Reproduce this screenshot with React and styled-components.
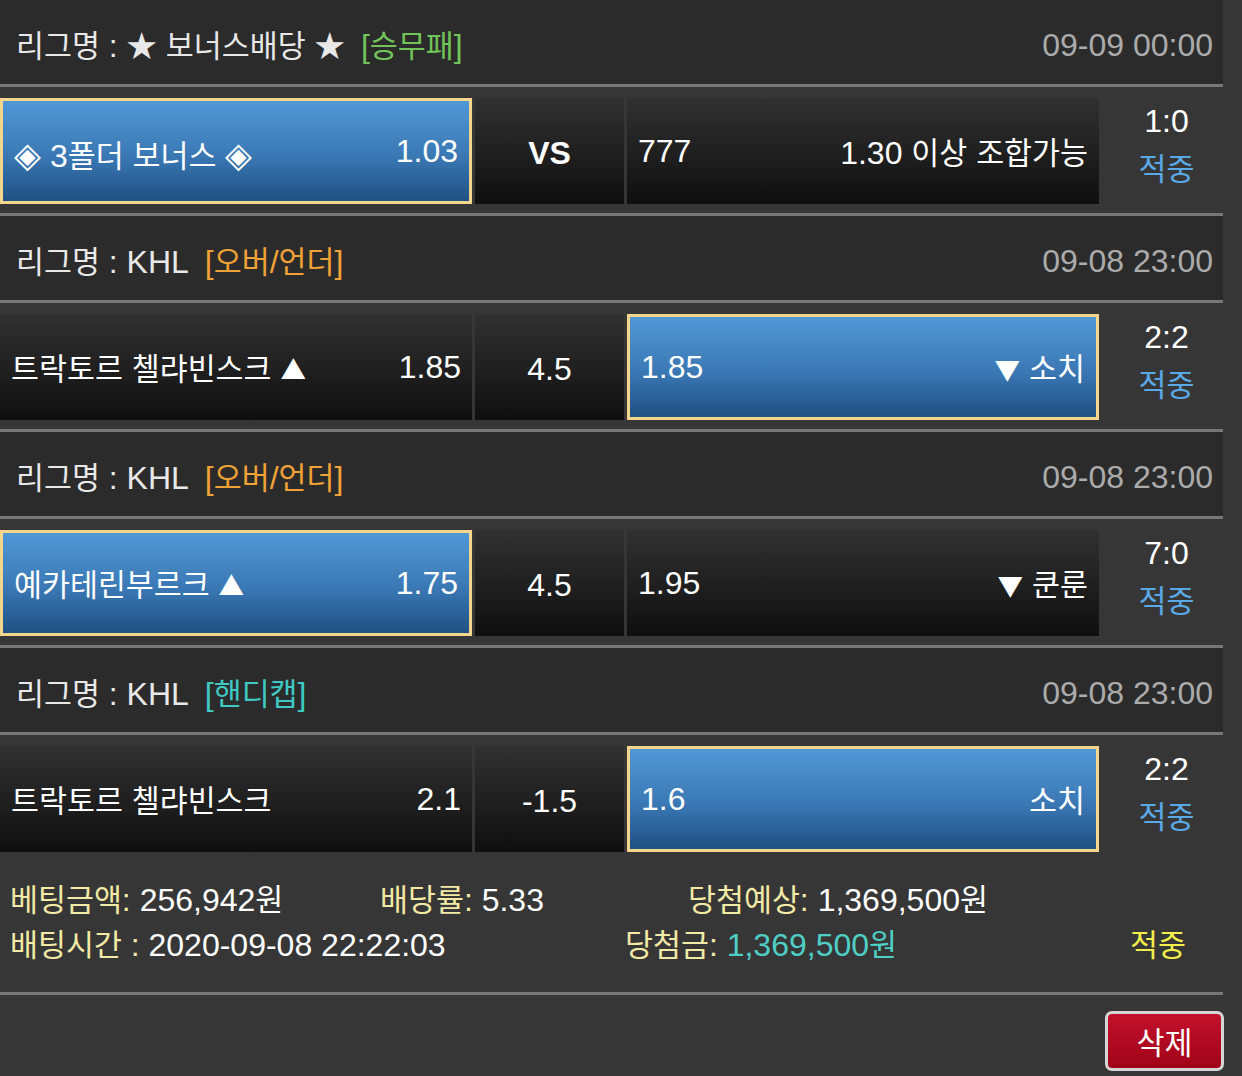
import React from 'react';
import styled, { createGlobalStyle } from 'styled-components';

const GlobalStyle = createGlobalStyle`
  html, body {
    margin: 0;
    padding: 0;
    background: #363636;
  }
  body {
    font-family: "Liberation Sans", "Noto Sans CJK KR", sans-serif;
    font-size: 32px;
    color: #fff;
  }
`;

// 한글은 CJK 폰트로, 삼각형(▲ ▼)은 작게, 다이아몬드(◈)는 크게
const RUNS = /([\u3131-\u318E\uAC00-\uD7A3\u2605]+|[\u25B2\u25BC]+|[\u25C8]+)/;
const ARROW = /^[\u25B2\u25BC]+$/;
const DIAMOND = /^[\u25C8]+$/;

const Txt = ({ children }) => {
  const parts = String(children).split(RUNS);
  return parts.map((p, i) => {
    if (!p) return null;
    if (ARROW.test(p)) return <Glyph key={i} size="0.8em">{p}</Glyph>;
    if (DIAMOND.test(p)) return <Glyph key={i} size="1.1em">{p}</Glyph>;
    if (RUNS.test(p)) return <Glyph key={i} size="0.95em">{p}</Glyph>;
    return p;
  });
};

const matches = [
  {
    league: '★ 보너스배당 ★',
    type: '승무패',
    typeColor: '#72c35a',
    time: '09-09 00:00',
    home: '◈ 3폴더 보너스 ◈',
    homeOdds: '1.03',
    mid: 'VS',
    awayOdds: '777',
    away: '1.30 이상 조합가능',
    pick: 'home',
    score: '1:0',
  },
  {
    league: 'KHL',
    type: '오버/언더',
    typeColor: '#f0a236',
    time: '09-08 23:00',
    home: '트락토르 첼랴빈스크 ▲',
    homeOdds: '1.85',
    mid: '4.5',
    awayOdds: '1.85',
    away: '▼ 소치',
    pick: 'away',
    score: '2:2',
  },
  {
    league: 'KHL',
    type: '오버/언더',
    typeColor: '#f0a236',
    time: '09-08 23:00',
    home: '예카테린부르크 ▲',
    homeOdds: '1.75',
    mid: '4.5',
    awayOdds: '1.95',
    away: '▼ 쿤룬',
    pick: 'home',
    score: '7:0',
  },
  {
    league: 'KHL',
    type: '핸디캡',
    typeColor: '#3fc9c4',
    time: '09-08 23:00',
    home: '트락토르 첼랴빈스크',
    homeOdds: '2.1',
    mid: '-1.5',
    awayOdds: '1.6',
    away: '소치',
    pick: 'away',
    score: '2:2',
  },
];

const App = () => {
  return (
    <>
      <GlobalStyle />
      <Page>
        {matches.map((m, i) => (
          <div key={i}>
            <LeagueBar>
              <LeagueName><Txt>{`리그명 : ${m.league}`}</Txt></LeagueName>
              <BetType color={m.typeColor}><Txt>{`[${m.type}]`}</Txt></BetType>
              <Time>{m.time}</Time>
            </LeagueBar>

            <MatchRow last={i === matches.length - 1}>
              <Pick selected={m.pick === 'home'}>
                <span><Txt>{m.home}</Txt></span>
                <span>{m.homeOdds}</span>
              </Pick>
              <Handicap bold={m.mid === 'VS'}>{m.mid}</Handicap>
              <Pick selected={m.pick === 'away'}>
                <span>{m.awayOdds}</span>
                <span><Txt>{m.away}</Txt></span>
              </Pick>
              <Result>
                <Score>{m.score}</Score>
                <Hit><Txt>적중</Txt></Hit>
              </Result>
            </MatchRow>
          </div>
        ))}

        <Summary>
          <SummaryLine>
            <Item width="370px"><Label><Txt>베팅금액:</Txt></Label> <Txt>256,942원</Txt></Item>
            <Item width="308px"><Label><Txt>배당률:</Txt></Label> 5.33</Item>
            <Item><Label><Txt>당첨예상:</Txt></Label> <Txt>1,369,500원</Txt></Item>
          </SummaryLine>
          <SummaryLine>
            <Item width="615px"><Label><Txt>배팅시간 :</Txt></Label> 2020-09-08 22:22:03</Item>
            <Item width="505px"><Label><Txt>당첨금:</Txt></Label> <Win><Txt>1,369,500원</Txt></Win></Item>
            <Item><Status><Txt>적중</Txt></Status></Item>
          </SummaryLine>
        </Summary>

        <Actions>
          <DeleteButton><Txt>삭제</Txt></DeleteButton>
        </Actions>
      </Page>
    </>
  );
};

export default App;

// Styled Components

const Glyph = styled.span`
  font-family: "Noto Sans CJK KR", sans-serif;
  font-size: ${(p) => p.size};
`;

const Page = styled.div`
  width: 1223px;
  background: #363636;
`;

const LeagueBar = styled.div`
  display: flex;
  align-items: center;
  height: 87px;
  padding: 6px 10px 0 16px;
  box-sizing: border-box;
  background: #2b2b2b;
  border-bottom: 3px solid #777;
  line-height: 1;
`;

const LeagueName = styled.span`
  color: #e8e8e8;
`;

const BetType = styled.span`
  margin-left: 16px;
  color: ${(p) => p.color};
`;

const Time = styled.span`
  margin-left: auto;
  color: #ababab;
`;

const MatchRow = styled.div`
  display: grid;
  grid-template-columns: 472px 149px 472px 1fr;
  column-gap: 3px;
  padding: 11px 0 ${(p) => (p.last ? '0' : '9px')};
  border-bottom: ${(p) => (p.last ? 'none' : '3px solid #777')};
`;

const Pick = styled.div`
  display: flex;
  align-items: center;
  justify-content: space-between;
  height: 106px;
  padding: 0 11px;
  box-sizing: border-box;
  white-space: nowrap;
  background: ${(p) =>
    p.selected
      ? 'linear-gradient(#5198d6, #3a78b4 55%, #1f5083)'
      : 'linear-gradient(#313131, #0f0f0f)'};
  border: ${(p) => (p.selected ? '3px solid #f4d58c' : 'none')};
`;

const Handicap = styled.div`
  display: flex;
  align-items: center;
  justify-content: center;
  height: 106px;
  padding-top: 4px;
  box-sizing: border-box;
  background: linear-gradient(#313131, #0f0f0f);
  font-weight: ${(p) => (p.bold ? 700 : 400)};
`;

const Result = styled.div`
  display: flex;
  flex-direction: column;
  align-items: center;
  line-height: 46px;
  padding-left: 8px;
`;

const Score = styled.span`
  color: #fff;
`;

const Hit = styled.span`
  color: #5aa9e6;
`;

const Summary = styled.div`
  padding: 23px 0 27px 10px;
  border-bottom: 3px solid #777;
`;

const SummaryLine = styled.div`
  display: flex;
  height: 45px;
  align-items: center;
  white-space: nowrap;
`;

const Item = styled.div`
  width: ${(p) => p.width || 'auto'};
  flex-shrink: 0;
`;

const Label = styled.span`
  color: #f3eaa6;
`;

const Win = styled.span`
  color: #4ecfc6;
`;

const Status = styled.span`
  color: #f2ee4c;
`;

const Actions = styled.div`
  display: flex;
  justify-content: flex-end;
  padding: 16px 0 4px;
  margin-right: -1px;
`;

const DeleteButton = styled.button`
  width: 119px;
  height: 60px;
  font-family: inherit;
  font-size: 32px;
  color: #fff;
  background: linear-gradient(#c2112b, #a00419);
  border: 3px solid #d6d6d6;
  border-radius: 7px;
  cursor: pointer;
  padding: 0;
`;
